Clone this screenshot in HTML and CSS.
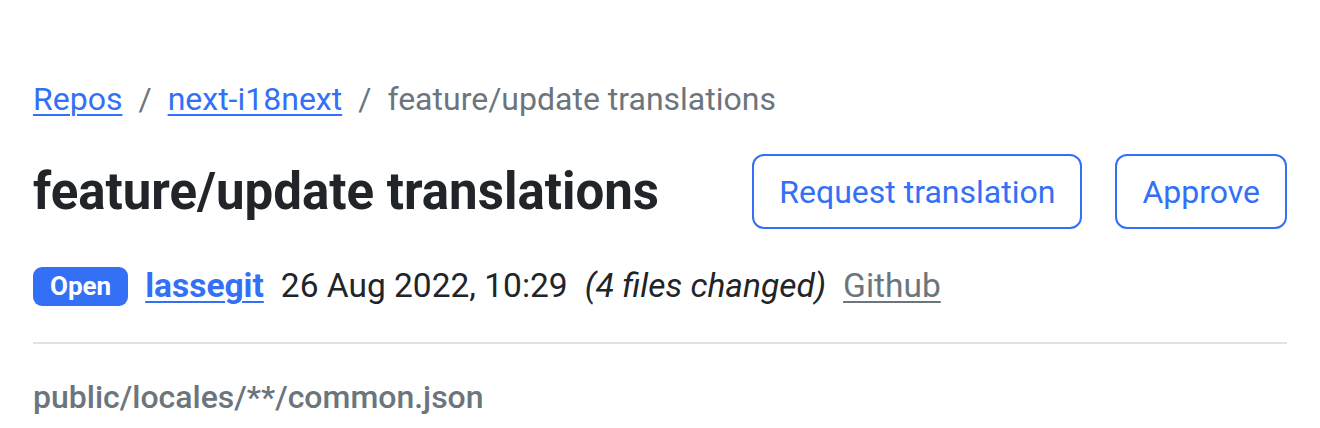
FILE: index.html
```html
<!DOCTYPE html>
<html lang="en">
<head>
<meta charset="utf-8">
<title>feature/update translations</title>
<link rel="stylesheet" href="styles.css">
</head>
<body>
<main class="page">
  <nav class="crumbs">
    <a class="crumb-link" href="#">Repos</a>
    <span class="crumb-sep">/</span>
    <a class="crumb-link" href="#">next-i18next</a>
    <span class="crumb-sep">/</span>
    <span class="crumb-current">feature/update translations</span>
  </nav>
  <header class="title-row">
    <h1 class="title">feature/update translations</h1>
    <div class="actions">
      <button class="btn">Request translation</button>
      <button class="btn">Approve</button>
    </div>
  </header>
  <div class="meta">
    <span class="badge">Open</span>
    <a class="author" href="#">lassegit</a>
    <span class="date">26 Aug 2022, 10:29</span>
    <em class="changes">(4 files changed)</em>
    <a class="github" href="#">Github</a>
  </div>
  <hr class="divider">
  <div class="file">public/locales/**/common.json</div>
</main>
</body>
</html>
```
FILE: styles.css
```css
html, body {
  margin: 0;
  padding: 0;
  background: #ffffff;
}
body {
  font-family: Roboto, "Liberation Sans", Arial, sans-serif;
  color: #212529;
}
.page {
  padding: 78px 33px 0 33px;
}
.crumbs {
  display: flex;
  align-items: center;
  gap: 16px;
  font-size: 32px;
  line-height: 42px;
  height: 42px;
}
.crumb-link {
  color: #3370f5;
  text-decoration: underline;
  text-underline-offset: 4px;
  text-decoration-thickness: 2px;
}
.crumb-sep, .crumb-current {
  color: #6c757d;
}
.title-row {
  display: flex;
  align-items: center;
  justify-content: space-between;
  margin-top: 34px;
  height: 75px;
}
.title {
  margin: 0;
  font-size: 51px;
  font-weight: 700;
  line-height: 1.2;
  color: #212529;
}
.actions {
  display: flex;
  gap: 33px;
}
.btn {
  font-family: inherit;
  font-size: 32px;
  color: #3370f5;
  background: #ffffff;
  border: 2px solid #3370f5;
  border-radius: 12px;
  height: 75px;
  padding: 0 25px;
  line-height: 1;
}
.meta {
  display: flex;
  align-items: center;
  gap: 17px;
  margin-top: 36px;
  height: 42px;
  font-size: 33.5px;
  line-height: 42px;
}
.badge {
  display: inline-flex;
  align-items: center;
  height: 39px;
  padding: 0 17px;
  background: #3370f5;
  color: #ffffff;
  border-radius: 9px;
  font-size: 26px;
  font-weight: 700;
}
.author {
  color: #3370f5;
  font-weight: 700;
  text-decoration: underline;
  text-underline-offset: 4px;
  text-decoration-thickness: 2px;
}
.changes {
  font-style: italic;
}
.github {
  color: #6c757d;
  text-decoration: underline;
  text-underline-offset: 4px;
  text-decoration-thickness: 2px;
}
.divider {
  margin: 35px 0 0 0;
  border: 0;
  height: 2px;
  background: #dee2e6;
}
.file {
  margin-top: 32px;
  font-size: 32px;
  line-height: 42px;
  font-weight: 500;
  color: #6c757d;
}
```
